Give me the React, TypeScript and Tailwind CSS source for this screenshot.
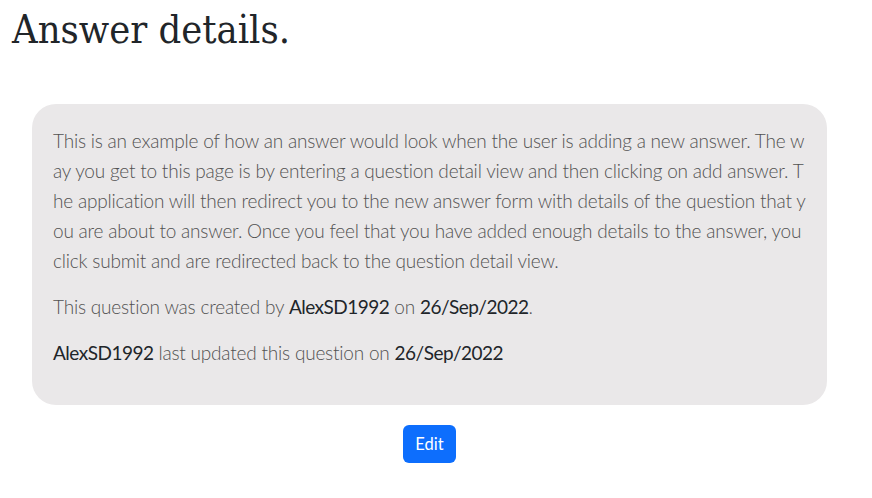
import React from "react";

const lines = [
  "This is an example of how an answer would look when the user is adding a new answer. The w",
  "ay you get to this page is by entering a question detail view and then clicking on add answer. T",
  "he application will then redirect you to the new answer form with details of the question that y",
  "ou are about to answer. Once you feel that you have added enough details to the answer, you",
  "click submit and are redirected back to the question detail view.",
];

export default function App() {
  return (
    <div className="min-h-screen bg-white">
      <h1
        className="pl-[12px] pt-[5px] text-[39.5px] leading-[48px] text-[#212529]"
        style={{ fontFamily: '"DejaVu Serif Condensed", "DejaVu Serif", serif', fontStretch: "condensed" }}
      >
        Answer details.
      </h1>
      <div className="ml-[32px] mt-[51px] w-[795px]">
        <div
          className="rounded-[24px] bg-[#eae8e9] px-[21px] pt-[22px] pb-[21px] text-[19px] leading-[30px] tracking-[-0.2px] text-[#525252] font-light"
          style={{ fontFamily: 'Lato, "Open Sans", sans-serif' }}
        >
          <p className="mb-[16px]">
            {lines.map((l, i) => (
              <span key={i} className="block whitespace-nowrap">{l}</span>
            ))}
          </p>
          <p className="mb-[16px]">
            This question was created by <span className="font-normal tracking-[-0.5px] text-[#212529]">AlexSD1992</span> on{" "}
            <span className="font-normal tracking-[-0.5px] text-[#212529]">26/Sep/2022</span>.
          </p>
          <p className="mb-[16px]">
            <span className="font-normal tracking-[-0.5px] text-[#212529]">AlexSD1992</span> last updated this question on{" "}
            <span className="font-normal tracking-[-0.5px] text-[#212529]">26/Sep/2022</span>
          </p>
        </div>
        <div className="mt-[20px] flex justify-center">
          <button
            className="h-[38px] rounded-[6px] bg-[#0d6efd] px-[12px] text-[16.5px] leading-[24px] text-white"
            style={{ fontFamily: 'Lato, "Open Sans", sans-serif' }}
          >
            Edit
          </button>
        </div>
      </div>
    </div>
  );
}
